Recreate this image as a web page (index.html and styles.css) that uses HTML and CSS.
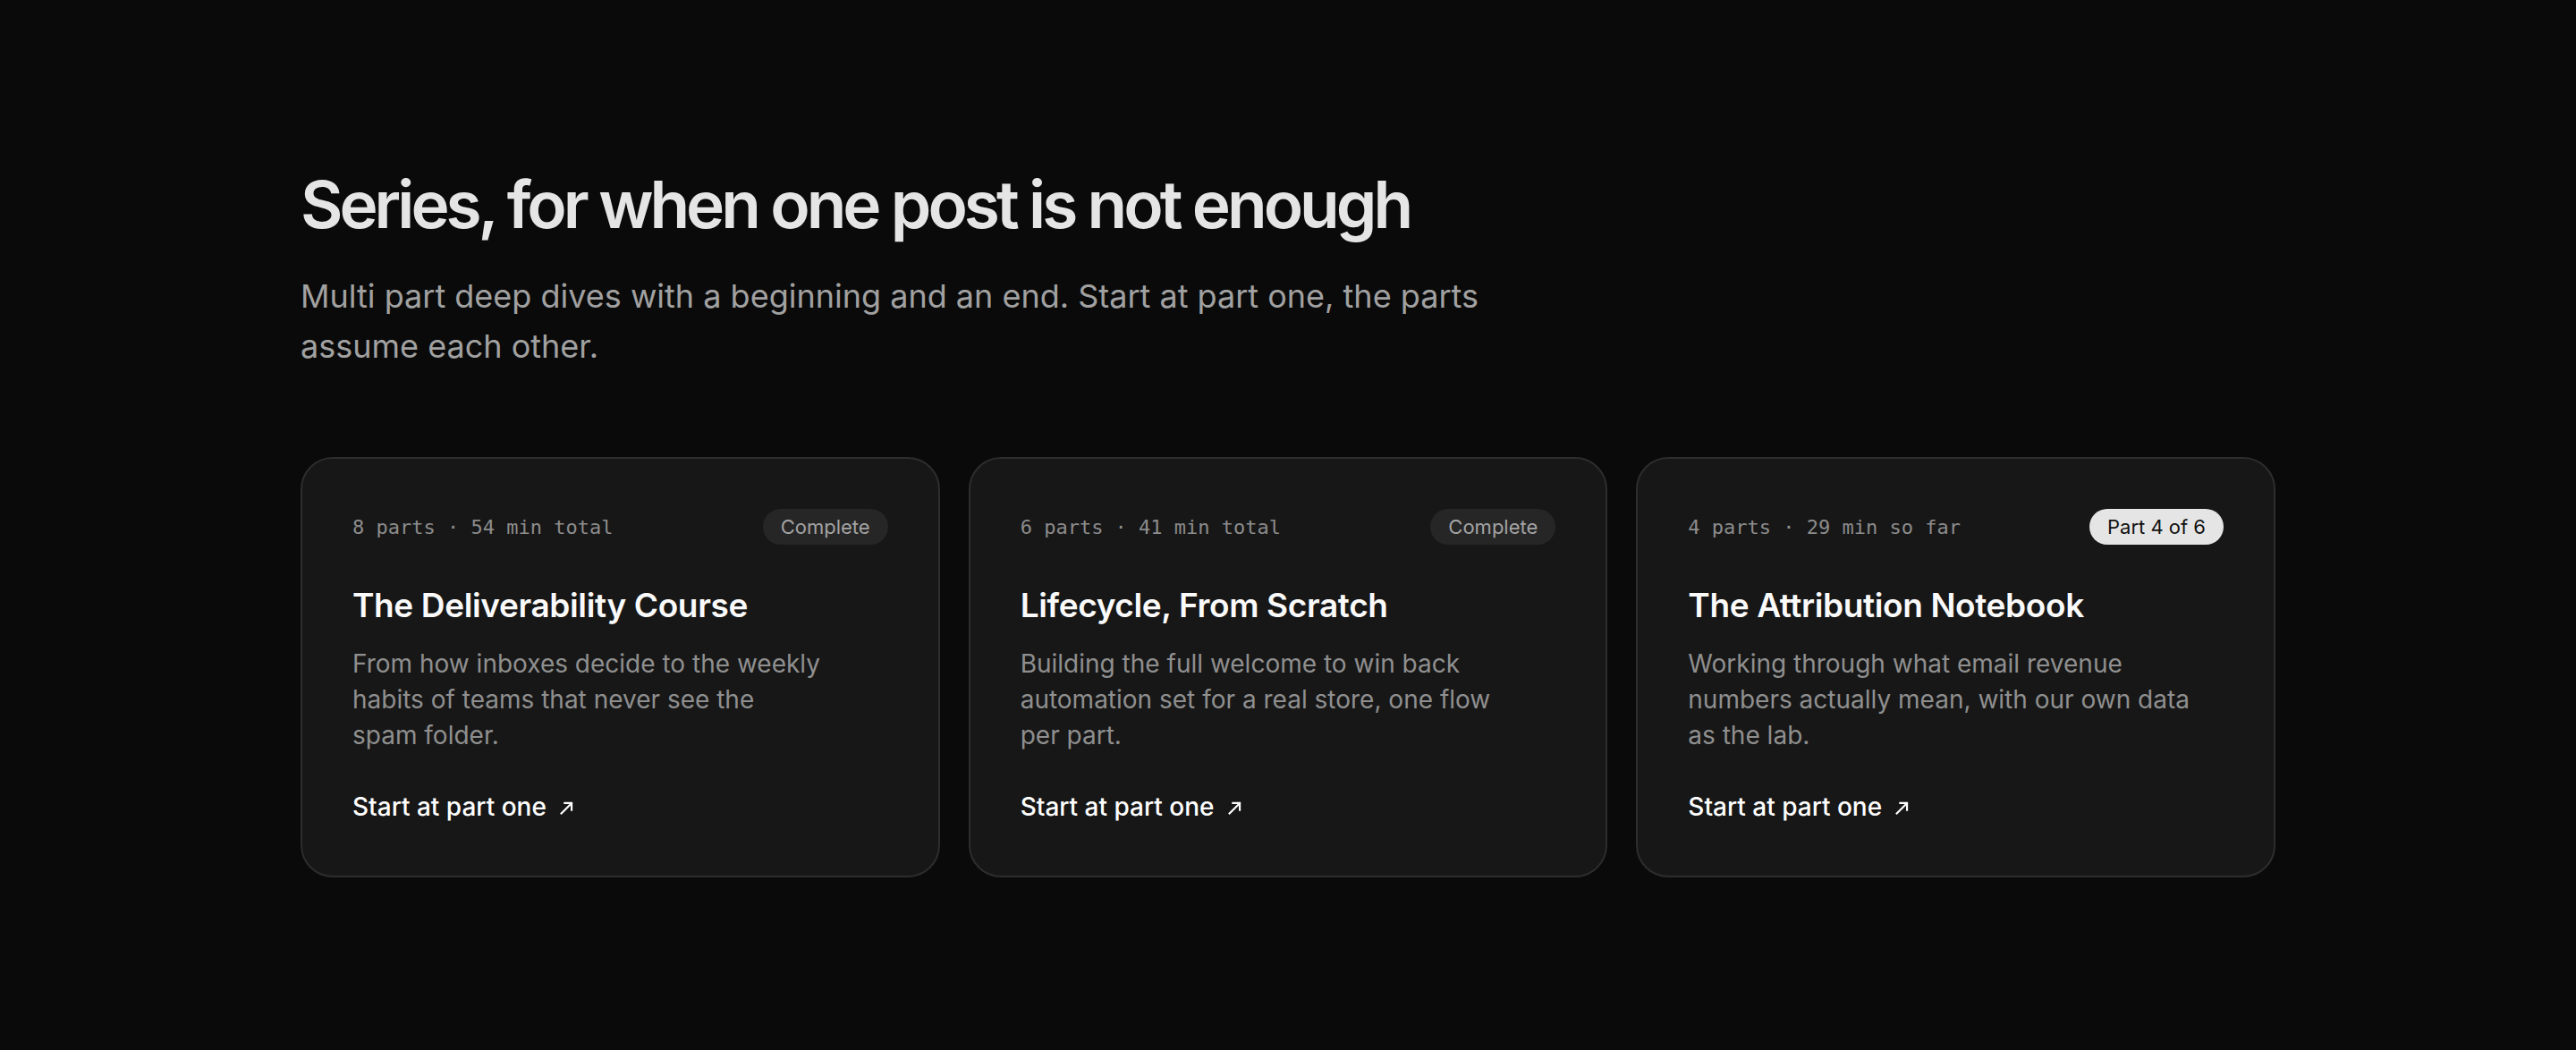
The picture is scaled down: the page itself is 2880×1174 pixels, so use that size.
FILE: index.html
```html
<!DOCTYPE html>
<html lang="en">
<head>
    <meta charset="UTF-8">
    <meta name="viewport" content="width=device-width, initial-scale=1.0">
    <title>Series</title>
    <link rel="stylesheet" href="styles.css">
</head>
<body>
    <section class="series">
        <h1>Series, for when one post is not enough</h1>
        <p class="lead">Multi part deep dives with a beginning and an end. Start at part one, the parts assume each other.</p>

        <div class="series-grid">
            <article class="series-card">
                <div class="meta">
                    <span class="stats">8 parts · 54 min total</span>
                    <span class="pill">Complete</span>
                </div>
                <h2>The Deliverability Course</h2>
                <p class="desc">From how inboxes decide to the weekly<br>habits of teams that never see the<br>spam folder.</p>
                <a class="start" href="#">Start at part one
                    <svg width="15" height="15" viewBox="0 0 14 14" fill="none" stroke="currentColor" stroke-width="2" stroke-linecap="square"><path d="M1.5 12.5 12 2"/><path d="M5 1.8h7.2V9"/></svg>
                </a>
            </article>

            <article class="series-card">
                <div class="meta">
                    <span class="stats">6 parts · 41 min total</span>
                    <span class="pill">Complete</span>
                </div>
                <h2>Lifecycle, From Scratch</h2>
                <p class="desc">Building the full welcome to win back<br>automation set for a real store, one flow<br>per part.</p>
                <a class="start" href="#">Start at part one
                    <svg width="15" height="15" viewBox="0 0 14 14" fill="none" stroke="currentColor" stroke-width="2" stroke-linecap="square"><path d="M1.5 12.5 12 2"/><path d="M5 1.8h7.2V9"/></svg>
                </a>
            </article>

            <article class="series-card">
                <div class="meta">
                    <span class="stats">4 parts · 29 min so far</span>
                    <span class="pill pill-current">Part 4 of 6</span>
                </div>
                <h2>The Attribution Notebook</h2>
                <p class="desc">Working through what email revenue<br>numbers actually mean, with our own data<br>as the lab.</p>
                <a class="start" href="#">Start at part one
                    <svg width="15" height="15" viewBox="0 0 14 14" fill="none" stroke="currentColor" stroke-width="2" stroke-linecap="square"><path d="M1.5 12.5 12 2"/><path d="M5 1.8h7.2V9"/></svg>
                </a>
            </article>
        </div>
    </section>
</body>
</html>
```

FILE: styles.css
```css
body { margin: 0; background: #0a0a0a; color: #e5e5e5; font-family: Inter, "Noto Sans", sans-serif; }

.series { max-width: 2208px; margin: 0 auto; padding-top: 189px; }
.series h1 { margin: 0; font-size: 73px; line-height: 80px; font-weight: 600; letter-spacing: -0.055em; color: #e5e5e5; }
.lead { margin: 34px 0 0; max-width: 1340px; font-size: 36px; line-height: 56px; color: #a1a1a1; }

.series-grid { display: grid; grid-template-columns: repeat(3, 1fr); gap: 32px; margin-top: 96px; }
.series-card { background: #171717; border: 2px solid #2d2d2d; border-radius: 36px; padding: 56px 56px 57px; }

.meta { display: flex; justify-content: space-between; align-items: center; height: 40px; }
.stats { font-family: "DejaVu Sans Mono", monospace; font-size: 22px; color: #8c8c8c; }
.pill { background: #262626; color: #a3a3a3; font-size: 22px; line-height: 40px; padding: 0 20px; border-radius: 20px; }
.pill-current { background: #e5e5e5; color: #111; }

.series-card h2 { margin: 46px 0 0; font-size: 37px; line-height: 1.2; font-weight: 600; color: #fafafa; letter-spacing: -0.01em; }
.desc { margin: 23px 0 0; font-size: 28px; line-height: 40px; color: #8f8f8f; }

.start { display: inline-flex; align-items: center; gap: 15px; margin-top: 40px; font-size: 28px; line-height: 40px; font-weight: 500; color: #fff; text-decoration: none; }
.start svg { margin-top: 2px; }
```
